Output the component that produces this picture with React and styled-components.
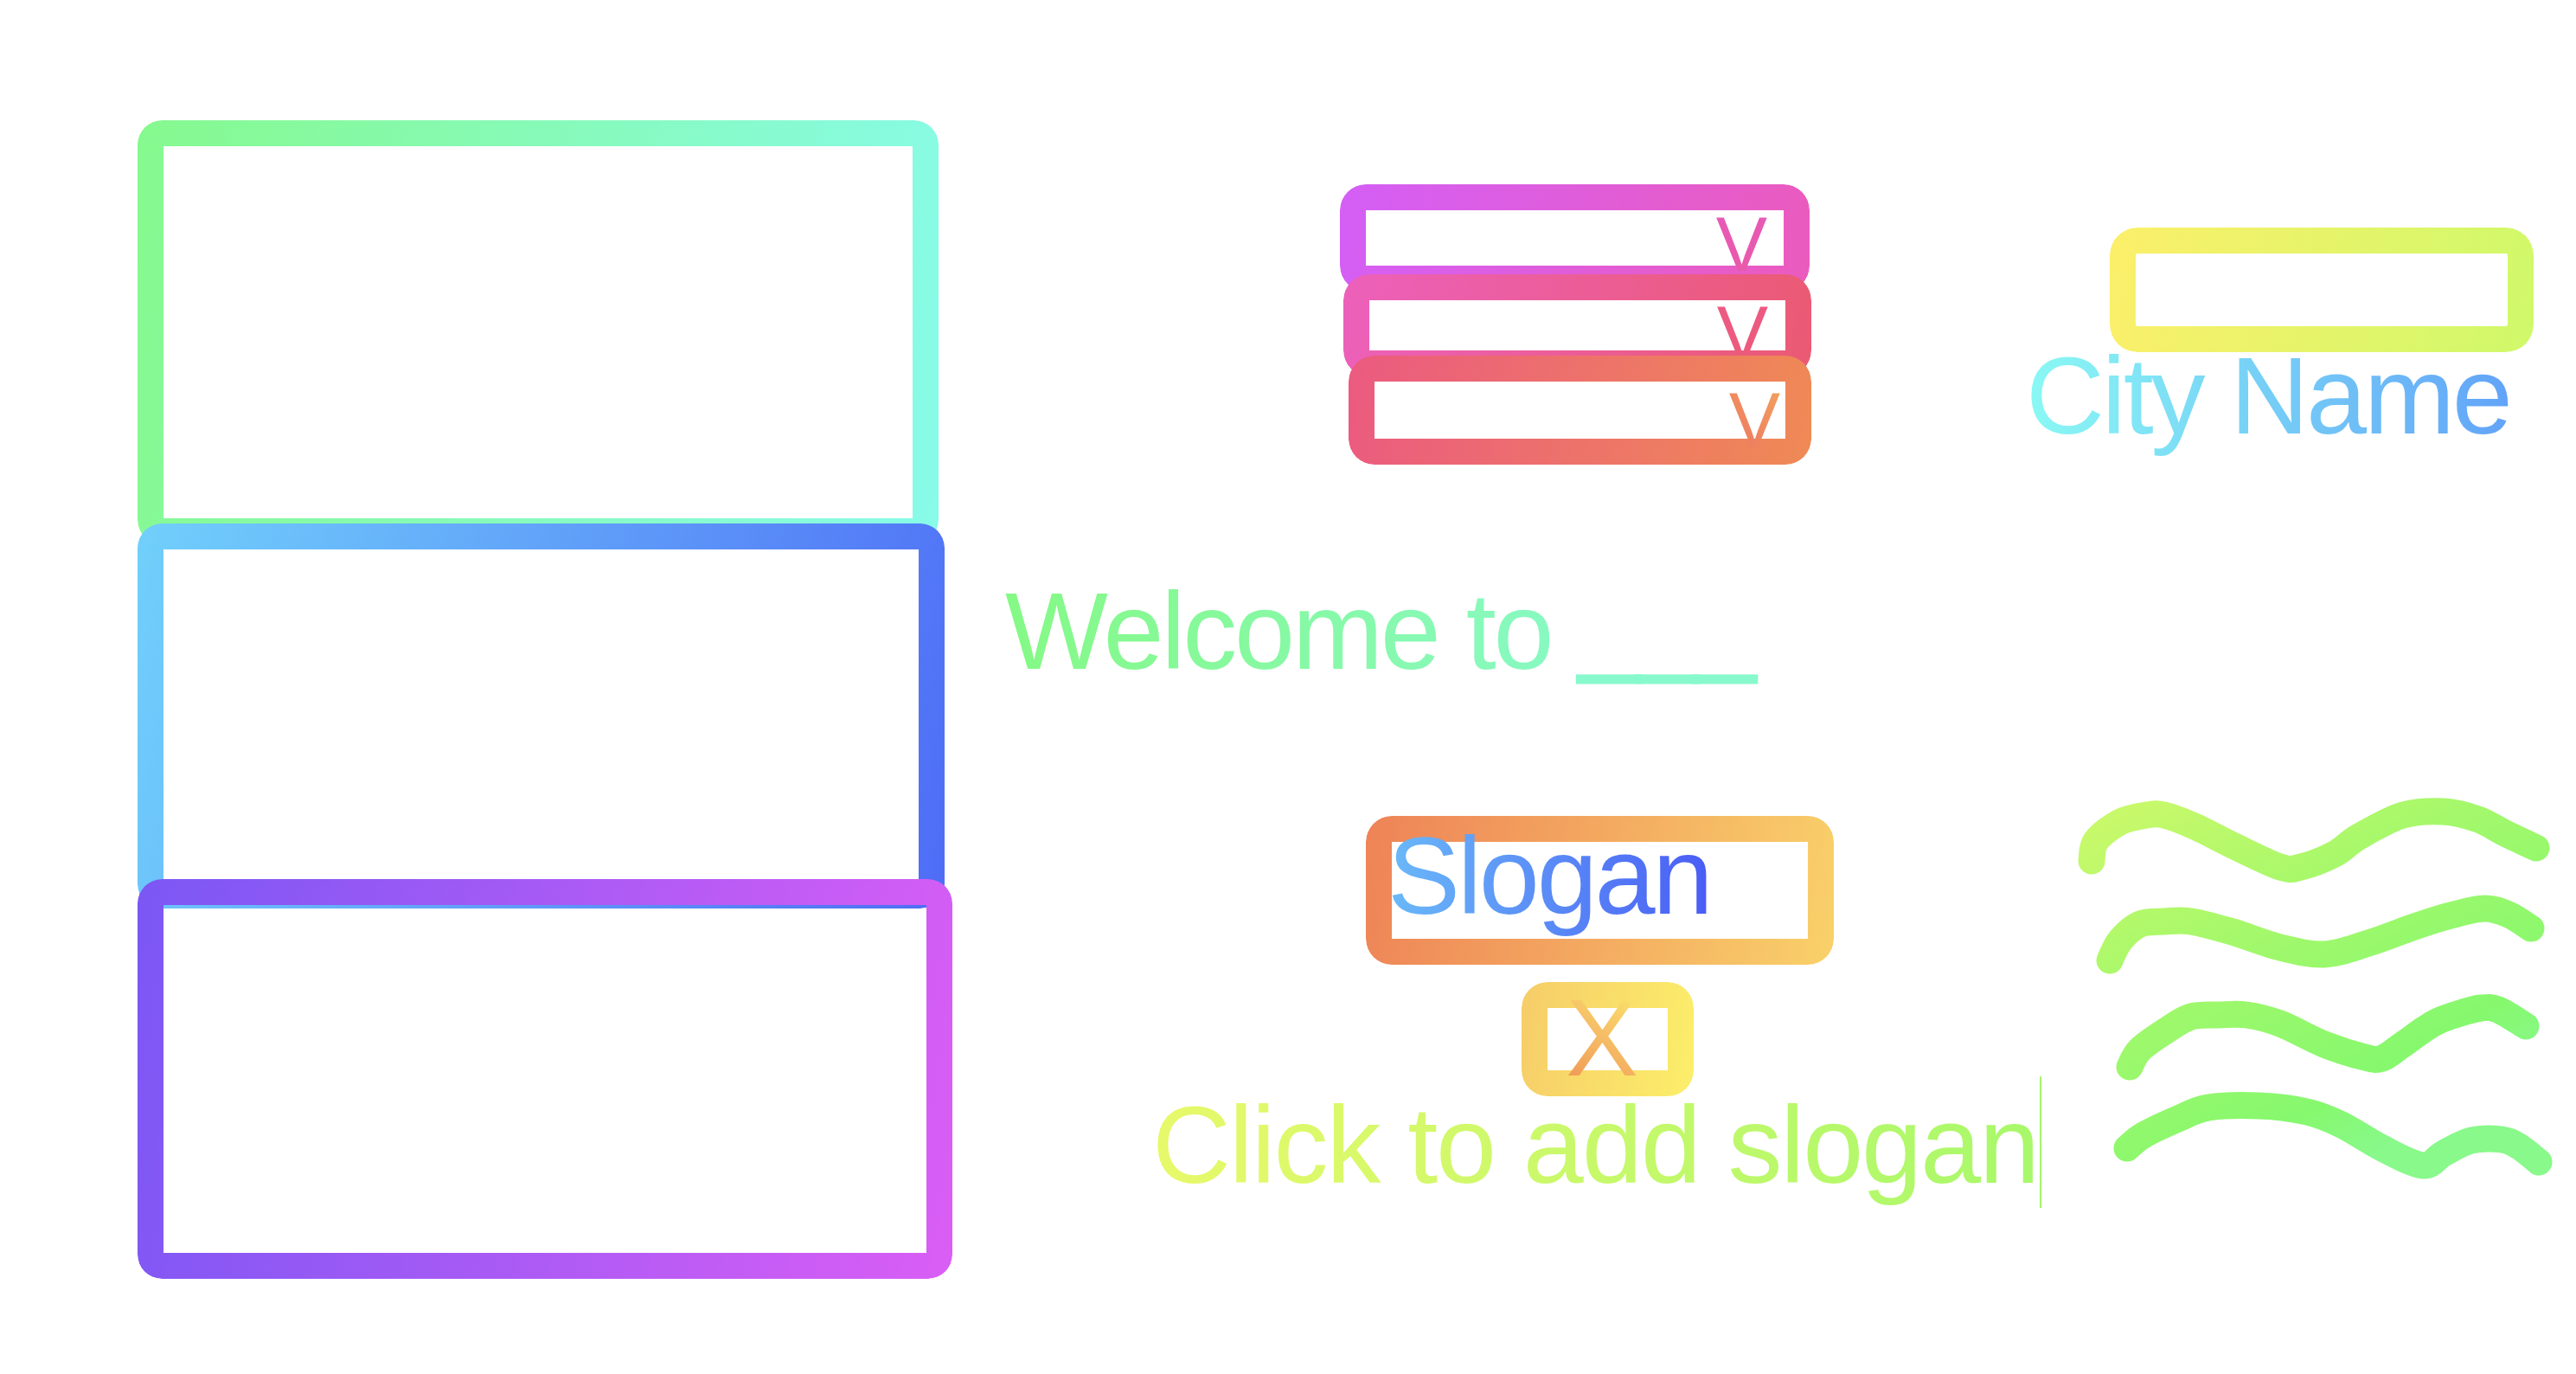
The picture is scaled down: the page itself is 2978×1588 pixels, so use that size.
import React from "react";
import styled, { createGlobalStyle } from "styled-components";

const GlobalStyle = createGlobalStyle`
  html, body { margin: 0; padding: 0; background: #ffffff; }
  body { font-family: "Liberation Sans", Arial, sans-serif; }
`;

const Canvas = styled.main`
  display: flex;
  align-items: flex-start;
  width: 2978px;
  height: 1588px;
  overflow: hidden;
  background: #ffffff;
`;

const Column = styled.section`
  display: flex;
  flex-direction: column;
  align-items: flex-start;
  flex: none;
  width: ${(p) => p.$width}px;
  margin-left: ${(p) => p.$left}px;
  margin-top: ${(p) => p.$top}px;
`;

const Frame = styled.div`
  position: relative;
  isolation: isolate;
  box-sizing: border-box;
  flex: none;
  display: flex;
  justify-content: ${(p) => p.$justify || "flex-start"};
  align-items: flex-start;
  width: ${(p) => p.$w}px;
  height: ${(p) => p.$h}px;
  margin-left: ${(p) => p.$ml || 0}px;
  margin-top: ${(p) => p.$mt || 0}px;
  padding: 30px;
  border-radius: ${(p) => p.$radius || 30}px;
  &::before {
    content: "";
    position: absolute;
    inset: 0;
    z-index: -1;
    box-sizing: border-box;
    padding: 30px;
    border-radius: inherit;
    background: ${(p) => p.$gradient};
    -webkit-mask: linear-gradient(#000 0 0) content-box, linear-gradient(#000 0 0);
    -webkit-mask-composite: xor;
    mask-composite: exclude;
    pointer-events: none;
  }
`;

const Ink = styled.span`
  background: ${(p) => p.$gradient};
  -webkit-background-clip: text;
  background-clip: text;
  color: transparent;
  -webkit-text-fill-color: transparent;
`;

const Blank = styled.span`
  line-height: 0;
  vertical-align: 9px;
  color: #88f9cc;
  -webkit-text-stroke: 3px #88f9cc;
`;

const Chevron = styled.div`
  font-size: 89px;
  line-height: ${(p) => p.$lh}px;
  margin-right: ${(p) => p.$mr}px;
  white-space: nowrap;
`;

const Headline = styled.div`
  font-size: 126px;
  line-height: ${(p) => p.$lh || 126}px;
  letter-spacing: ${(p) => p.$ls || -0.025}em;
  white-space: nowrap;
  margin-left: ${(p) => p.$ml || 0}px;
  margin-top: ${(p) => p.$mt || 0}px;
`;

const CloseMark = styled.div`
  box-sizing: border-box;
  width: 100%;
  padding-right: 13px;
  text-align: center;
  font-size: 126px;
  line-height: 69px;
`;

const Caret = styled.span`
  display: inline-block;
  width: 2px;
  height: 152px;
  margin-top: -30px;
  margin-left: 2px;
  vertical-align: -29px;
  background: #a6f470;
`;

const WaveArt = styled.svg`
  display: block;
  flex: none;
  margin-left: 58px;
  margin-top: ${(p) => p.$mt}px;
  overflow: visible;
`;

const toPath = (pts) => {
  let d = `M${pts[0][0]} ${pts[0][1]}`;
  for (let i = 0; i < pts.length - 1; i++) {
    const p0 = pts[i - 1] || pts[i];
    const p1 = pts[i];
    const p2 = pts[i + 1];
    const p3 = pts[i + 2] || p2;
    const c1x = p1[0] + (p2[0] - p0[0]) / 6;
    const c1y = p1[1] + (p2[1] - p0[1]) / 6;
    const c2x = p2[0] - (p3[0] - p1[0]) / 6;
    const c2y = p2[1] - (p3[1] - p1[1]) / 6;
    d += ` C${c1x.toFixed(1)} ${c1y.toFixed(1)} ${c2x.toFixed(1)} ${c2y.toFixed(1)} ${p2[0]} ${p2[1]}`;
  }
  return d;
};

const waves = [
  [[18, 75], [23, 52], [51, 30], [82, 22], [102, 22], [137, 35], [181, 57], [236, 82], [260, 82], [299, 67], [327, 47], [378, 22], [425, 18], [465, 27], [496, 43], [532, 60]],
  [[39, 190], [51, 167], [74, 148], [102, 145], [133, 145], [181, 157], [236, 175], [287, 183], [338, 170], [394, 150], [433, 138], [472, 130], [500, 137], [526, 153]],
  [[62, 313], [74, 293], [106, 270], [133, 255], [165, 253], [197, 253], [236, 263], [287, 287], [334, 302], [354, 303], [378, 287], [413, 263], [441, 252], [468, 245], [488, 247], [520, 266]],
  [[59, 407], [78, 392], [118, 373], [153, 360], [212, 358], [267, 365], [307, 380], [354, 407], [401, 427], [425, 413], [457, 398], [492, 397], [512, 405], [535, 423]],
];

const G = {
  box1: "linear-gradient(100deg, #86f98e 0%, #88fbea 100%)",
  box2: "linear-gradient(105deg, #71d0fb 0%, #4e6cf6 100%)",
  box3: "linear-gradient(100deg, #7b57f4 0%, #da5ef5 100%)",
  dd1: "linear-gradient(100deg, #d45ff6 0%, #eb5bbd 100%)",
  dd2: "linear-gradient(100deg, #ec60bb 0%, #eb5a72 100%)",
  dd3: "linear-gradient(100deg, #eb5a80 0%, #ef8a55 100%)",
  v1: "linear-gradient(180deg, #e65ab8, #ea59a8)",
  v2: "linear-gradient(180deg, #ec5a86, #ec5a78)",
  v3: "linear-gradient(45deg, #ee6f62, #f1a65e)",
  city: "linear-gradient(100deg, #fcef6a 0%, #cff96a 100%)",
  cityText: "linear-gradient(90deg, #8af9f4 0%, #62a3f8 100%)",
  welcome: "linear-gradient(90deg, #85f985 0%, #88f9c4 100%)",
  slogan: "linear-gradient(100deg, #ee8357 0%, #f9d16a 100%)",
  sloganText: "linear-gradient(90deg, #6ab9f8 0%, #4a5df5 100%)",
  close: "linear-gradient(100deg, #f6cc69 0%, #fcef6a 100%)",
  closeText: "linear-gradient(30deg, #ee8e51 0%, #f6c067 55%, #fcf06a 100%)",
  click: "linear-gradient(90deg, #e7f96a 0%, #a8f86b 100%)",
};

export default function App() {
  return (
    <>
      <GlobalStyle />
      <Canvas>
        <Column $width={942} $left={159} $top={139}>
          <Frame $w={926} $h={490} $radius={28} $gradient={G.box1} />
          <Frame $w={933} $h={445} $mt={-24} $radius={28} $gradient={G.box2} />
          <Frame $w={942} $h={462} $mt={-34} $radius={28} $gradient={G.box3} />
        </Column>

        <Column $width={1180} $left={61} $top={213}>
          <Frame $w={543} $h={124} $ml={387} $justify="flex-end" $gradient={G.dd1}>
            <Chevron $lh={78} $mr={19}>
              <Ink $gradient={G.v1}>V</Ink>
            </Chevron>
          </Frame>
          <Frame $w={541} $h={118} $ml={391} $mt={-20} $justify="flex-end" $gradient={G.dd2}>
            <Chevron $lh={76} $mr={20}>
              <Ink $gradient={G.v2}>V</Ink>
            </Chevron>
          </Frame>
          <Frame $w={535} $h={126} $ml={397} $mt={-24} $justify="flex-end" $gradient={G.dd3}>
            <Chevron $lh={88} $mr={6}>
              <Ink $gradient={G.v3}>V</Ink>
            </Chevron>
          </Frame>

          <Headline $mt={130}>
            <Ink $gradient={G.welcome}>Welcome to </Ink>
            <Blank>___</Blank>
          </Headline>

          <Frame $w={541} $h={172} $ml={417} $mt={150} $gradient={G.slogan}>
            <Headline $lh={79} $ml={-5}>
              <Ink $gradient={G.sloganText}>Slogan</Ink>
            </Headline>
          </Frame>

          <Frame $w={199} $h={132} $ml={597} $mt={20} $gradient={G.close}>
            <CloseMark>
              <Ink $gradient={G.closeText}>X</Ink>
            </CloseMark>
          </Frame>

          <Headline $ml={170} $mt={-6} $ls={-0.017}>
            <Ink $gradient={G.click}>Click to add slogan</Ink>
            <Caret />
          </Headline>
        </Column>

        <Column $width={636} $left={0} $top={263}>
          <Frame $w={490} $h={144} $ml={97} $radius={32} $gradient={G.city} />
          <Headline $mt={-12}>
            <Ink $gradient={G.cityText}>City Name</Ink>
          </Headline>
          <WaveArt $mt={399} width="560" height="450" viewBox="0 0 560 450">
            <defs>
              <linearGradient id="waveInk" gradientUnits="userSpaceOnUse" x1="0" y1="0" x2="260" y2="460">
                <stop offset="0" stopColor="#cff96a" />
                <stop offset="0.45" stopColor="#a4f86b" />
                <stop offset="0.85" stopColor="#86f86e" />
                <stop offset="1" stopColor="#88f98a" />
              </linearGradient>
            </defs>
            {waves.map((pts, i) => (
              <path
                key={i}
                d={toPath(pts)}
                fill="none"
                stroke="url(#waveInk)"
                strokeWidth="31"
                strokeLinecap="round"
                strokeLinejoin="round"
              />
            ))}
          </WaveArt>
        </Column>
      </Canvas>
    </>
  );
}
